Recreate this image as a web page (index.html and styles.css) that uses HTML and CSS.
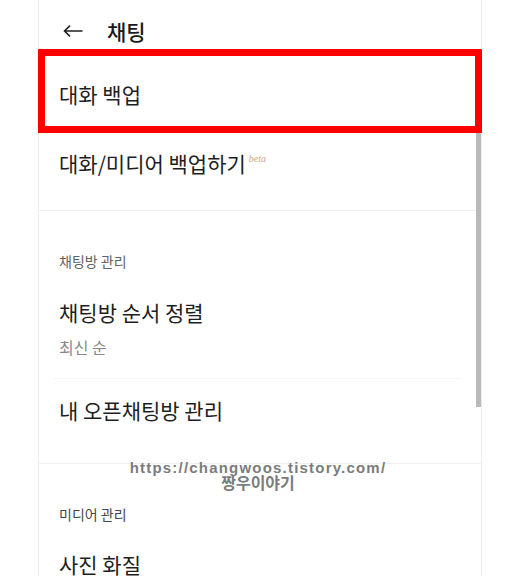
FILE: index.html
```html
<!DOCTYPE html>
<html>
<head>
    <meta charset="UTF-8">
    <title>채팅</title>
    <link rel="stylesheet" href="styles.css">
</head>
<body>
    <div class="screen">
        <div class="top-bar">
            <svg class="back" width="20" height="12" viewBox="0 0 20 12">
                <path d="M19.5 6H1.5M7 0.6L1.5 6L7 11.4" fill="none" stroke="#222" stroke-width="1.6"/>
            </svg>
            <span class="top-title">채팅</span>
        </div>

        <div class="marked">대화 백업</div>

        <div class="group first-group">
            <div class="item-title">대화/미디어 백업하기<span class="beta">beta</span></div>
        </div>

        <div class="group">
            <div class="group-label">채팅방 관리</div>
            <div class="item-title sort-title">채팅방 순서 정렬</div>
            <div class="item-sub">최신 순</div>
            <div class="soft-line"></div>
            <div class="item-title open-title">내 오픈채팅방 관리</div>
        </div>

        <div class="group last-group">
            <div class="group-label dark-label">미디어 관리</div>
            <div class="item-title photo-title">사진 화질</div>
        </div>

        <div class="scroll-thumb"></div>
    </div>

    <div class="watermark">
        <div class="mark-url">https://changwoos.tistory.com/</div>
        <div class="mark-name">짱우이야기</div>
    </div>
</body>
</html>
```

FILE: styles.css
```css
body {
    margin: 0;
    background-color: #ffffff;
    font-family: "Noto Sans CJK KR", "Noto Sans", sans-serif;
    color: #1e1e1e;
    height: 576px;
    overflow: hidden;
    position: relative;
}

.screen {
    position: relative;
    margin-left: 38px;
    width: 444px;
    height: 576px;
    box-sizing: border-box;
    border-left: 1px solid #ededed;
    border-right: 1px solid #ededed;
}

.top-bar {
    height: 49px;
    box-sizing: border-box;
    padding-top: 12px;
    padding-left: 24px;
    display: flex;
    align-items: center;
}

.back {
    display: block;
    margin-right: 24px;
}

.top-title {
    font-size: 21px;
    font-weight: 500;
    line-height: 28px;
    color: #1a1a1a;
}

.marked {
    margin: 0 -1px;
    height: 84px;
    box-sizing: border-box;
    border: 7px solid #ff0000;
    padding: 5px 0 0 14px;
    display: flex;
    align-items: center;
    font-size: 21px;
    line-height: 28px;
}

.group {
    border-bottom: 1px solid #efefef;
    padding-left: 20px;
}

.first-group {
    height: 78px;
    box-sizing: border-box;
    padding-top: 12px;
}

.last-group {
    border-bottom: none;
}

.item-title {
    font-size: 21px;
    line-height: 28px;
}

.beta {
    font-family: "Liberation Serif", serif;
    font-style: italic;
    font-size: 10px;
    color: #d3a381;
    vertical-align: 10px;
    margin-left: 3px;
}

.group-label {
    padding-top: 41px;
    font-size: 14px;
    line-height: 18px;
    color: #626262;
}

.dark-label {
    color: #474747;
}

.sort-title {
    margin-top: 28px;
}

.item-sub {
    margin-top: 11px;
    font-size: 16px;
    line-height: 20px;
    color: #8a8a8a;
}

.soft-line {
    margin: 21px 19px 0 -5px;
    height: 1px;
    background-color: #f6f6f6;
}

.open-title {
    margin-top: 17px;
    padding-bottom: 39px;
}

.photo-title {
    margin-top: 27px;
}

.scroll-thumb {
    position: absolute;
    top: 133px;
    right: 0;
    width: 5px;
    height: 274px;
    background-color: #b9b9b9;
}

.watermark {
    position: absolute;
    top: 461px;
    left: 1px;
    right: 0;
    text-align: center;
    color: #7c7c7c;
    font-weight: 700;
}

.mark-url {
    font-family: "Liberation Sans", sans-serif;
    font-size: 15px;
    letter-spacing: 1.2px;
    line-height: 14px;
}

.mark-name {
    font-family: "Noto Sans CJK KR", sans-serif;
    font-size: 16px;
    line-height: 15px;
}
```
